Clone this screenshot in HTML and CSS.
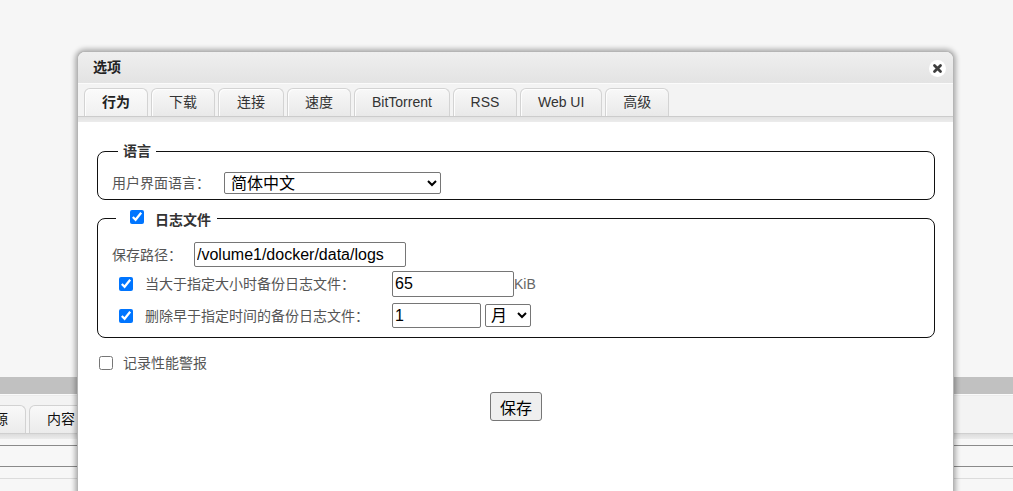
FILE: index.html
```html
<!DOCTYPE html>
<html lang="zh">
<head>
<meta charset="utf-8">
<title>选项</title>
<link rel="stylesheet" href="styles.css">
</head>
<body>
<div class="backdrop">
  <div class="bg-space"></div>
  <div class="bg-bar"></div>
  <div class="bg-line"></div>
  <div class="bg-tabs">
    <div class="bg-tab bg-tab-first">资源</div>
    <div class="bg-tab">内容</div>
  </div>
  <div class="bg-band"></div>
  <div class="bg-row bg-row-1"></div>
  <div class="bg-row bg-row-2"></div>
  <div class="bg-row bg-row-3"></div>
</div>

<div class="dialog">
  <div class="titlebar">
    <span class="title">选项</span>
    <span class="close">
      <svg width="17" height="17" viewBox="0 0 17 17"><circle cx="8.5" cy="8.5" r="8.5" fill="#fff"/><path d="M5.5 5.5 L11.5 11.5 M11.5 5.5 L5.5 11.5" stroke="#3f3f3f" stroke-width="2.8" stroke-linecap="round"/></svg>
    </span>
  </div>
  <div class="tabbar">
    <div class="tab active">行为</div>
    <div class="tab">下载</div>
    <div class="tab tab-wide">连接</div>
    <div class="tab">速度</div>
    <div class="tab">BitTorrent</div>
    <div class="tab tab-rss">RSS</div>
    <div class="tab">Web UI</div>
    <div class="tab">高级</div>
  </div>
  <div class="tabband"></div>
  <div class="content">
    <fieldset class="group group-lang">
      <legend class="legend">语言</legend>
      <div class="row row-lang">
        <label class="label label-lang">用户界面语言：</label>
        <select class="select select-lang"><option>简体中文</option></select>
      </div>
    </fieldset>

    <fieldset class="group group-log">
      <legend class="legend legend-check"><input type="checkbox" class="cb cb-legend" checked><span class="legend-text">日志文件</span></legend>
      <div class="row row-path">
        <label class="label label-path">保存路径：</label>
        <input class="field field-path" type="text" value="/volume1/docker/data/logs">
      </div>
      <div class="row row-size">
        <input type="checkbox" class="cb cb-row" checked>
        <label class="label label-opt">当大于指定大小时备份日志文件：</label>
        <input class="field field-size" type="text" value="65">
        <span class="unit">KiB</span>
      </div>
      <div class="row row-time">
        <input type="checkbox" class="cb cb-row" checked>
        <label class="label label-opt">删除早于指定时间的备份日志文件：</label>
        <input class="field field-time" type="text" value="1">
        <select class="select select-unit"><option>月</option></select>
      </div>
    </fieldset>

    <div class="perf">
      <input type="checkbox" class="cb cb-perf">
      <label class="label">记录性能警报</label>
    </div>

    <div class="actions">
      <button class="btn" type="button">保存</button>
    </div>
  </div>
</div>
</body>
</html>
```

FILE: styles.css
```css
html, body {
  margin: 0;
  padding: 0;
}
body {
  width: 1013px;
  height: 491px;
  overflow: hidden;
  background: #f7f7f7;
  font-family: "Liberation Sans", "Noto Sans CJK SC", sans-serif;
  font-size: 14px;
  color: #222;
  position: relative;
}

/* background page */
.backdrop {
  display: flex;
  flex-direction: column;
}
.bg-space { height: 377px; background: #f6f6f6; }
.bg-bar { height: 17px; background: #c1c1c1; }
.bg-line { height: 2px; background: #ececec; border-top: 1px solid #fafafa; box-sizing: border-box; }
.bg-tabs {
  height: 37px;
  box-sizing: border-box;
  padding-top: 9px;
  background: #f3f3f3;
  display: flex;
  gap: 3px;
  align-items: flex-end;
}
.bg-tab {
  height: 28px;
  box-sizing: border-box;
  padding: 0 17px;
  line-height: 27px;
  border: 1px solid #d2d2d2;
  border-bottom: none;
  border-radius: 6px 6px 0 0;
  background: linear-gradient(#f9f9f9, #ebebeb);
  color: #111;
}
.bg-tab-first { margin-left: -38px; }
.bg-band {
  height: 5px;
  background: linear-gradient(#dcdcdc, #ececec);
  border-top: 1px solid #cfcfcf;
}
.bg-row {
  background: #f7f7f7;
  border-bottom: 1px solid #8a8a8a;
}
.bg-row-1 { height: 6px; }
.bg-row-2 { height: 20px; }
.bg-row-3 { height: 11px; border-bottom-color: #dcdcdc; }

/* dialog */
.dialog {
  position: absolute;
  left: 77px;
  top: 51px;
  width: 875px;
  height: 450px;
  background: #fff;
  border: 1px solid #b5b5b5;
  border-bottom: none;
  border-radius: 8px 8px 0 0;
  box-shadow: 0 0 5px 2px rgba(0, 0, 0, 0.3);
  display: flex;
  flex-direction: column;
}
.titlebar {
  height: 31px;
  border-radius: 7px 7px 0 0;
  background: linear-gradient(#efefef, #e3e3e3);
  border-bottom: 1px solid #fbfbfb;
  display: flex;
  align-items: center;
  justify-content: space-between;
  padding: 0 7px 0 15px;
}
.title {
  font-weight: bold;
  font-size: 14px;
  color: #222;
  margin-top: -3px;
}
.close {
  display: flex;
  width: 17px;
  height: 17px;
  margin-top: 1px;
}
.tabbar {
  height: 32px;
  box-sizing: border-box;
  background: #f3f3f3;
  padding: 4px 0 0 6px;
  display: flex;
  gap: 3px;
  align-items: flex-end;
}
.tab {
  height: 28px;
  box-sizing: border-box;
  padding: 0 17px;
  line-height: 27px;
  border: 1px solid #d3d3d3;
  border-bottom: none;
  border-radius: 6px 6px 0 0;
  background: linear-gradient(#f8f8f8, #e9e9e9);
  box-shadow: inset 1px 1px 0 #fdfdfd;
  color: #333;
  font-size: 14px;
  text-align: center;
}
.tab.active {
  font-weight: bold;
  width: 64px;
  padding: 0;
  color: #222;
  background: linear-gradient(#fbfbfb, #f0f0f0);
}
.tab-wide { padding: 0 18px; }
.tab-rss { width: 64px; padding: 0; }
.tabband {
  height: 5px;
  border-top: 1px solid #cccccc;
  background: linear-gradient(#e2e2e2, #ececec);
}

.content {
  padding: 20px 18px 0 19px;
  display: flex;
  flex-direction: column;
}

.group {
  margin: 0;
  padding: 0 14px 5px 14px;
  border: 1px solid #111;
  border-radius: 8px;
  min-width: 0;
}
.legend {
  margin-left: 6px;
  padding: 0 5px;
  font-weight: bold;
  font-size: 14px;
  line-height: 18px;
  color: #333;
}
.legend-check {
  margin-left: 4px;
  padding: 0 6px 0 10px;
  display: flex;
  align-items: center;
  height: 18px;
}
.legend-text { margin-left: 11px; margin-top: 3px; }

.row {
  display: flex;
  align-items: center;
}
.row-lang {
  height: 22px;
  margin-top: 12px;
}
.row-path { height: 25px; }
.row-size { height: 26px; margin-top: 4px; }
.row-time { height: 25px; margin-top: 6px; }
.group-lang { padding-bottom: 5px; }
.group-log {
  margin-top: 9px;
  padding-top: 15px;
  padding-bottom: 9px;
}

.label {
  color: #555;
  font-size: 14px;
  line-height: 18px;
  white-space: nowrap;
}
.label-lang { width: 112px; }
.label-path { width: 82px; }
.label-opt { width: 247px; }

.cb {
  width: 14px;
  height: 14px;
  margin: 0;
  accent-color: #0075ff;
}
.cb-legend { margin: 0 0 2px 4px; }
.cb-row { margin: 0 12px 0 7px; }
.cb-perf { margin: 0 10px 0 2px; }

.field {
  box-sizing: border-box;
  height: 25px;
  border: 1px solid #767676;
  border-radius: 2px;
  padding: 1px 2px;
  font-family: "Liberation Sans", "Noto Sans CJK SC", sans-serif;
  font-size: 16px;
  color: #000;
  background: #fff;
}
.field-path { width: 212px; }
.field-size { width: 122px; height: 26px; }
.field-time { width: 89px; }
.unit {
  color: #666;
  font-size: 14px;
}

.select {
  box-sizing: border-box;
  border: 1px solid #767676;
  border-radius: 2px;
  font-family: "Liberation Sans", "Noto Sans CJK SC", sans-serif;
  font-size: 16px;
  color: #000;
  background: #fff;
}
.select-lang { width: 217px; height: 22px; padding: 0 0 0 2px; }
.select-unit { width: 46px; height: 23px; margin-left: 4px; padding: 0 0 0 1px; }

.perf {
  display: flex;
  align-items: center;
  margin-top: 16px;
  height: 18px;
}

.actions {
  display: flex;
  justify-content: center;
  margin-top: 20px;
}
.btn {
  box-sizing: border-box;
  height: 29px;
  padding: 0 9px;
  border: 1px solid #767676;
  border-radius: 3px;
  background: #efefef;
  font-family: "Liberation Sans", "Noto Sans CJK SC", sans-serif;
  font-size: 16px;
  color: #000;
}
```
